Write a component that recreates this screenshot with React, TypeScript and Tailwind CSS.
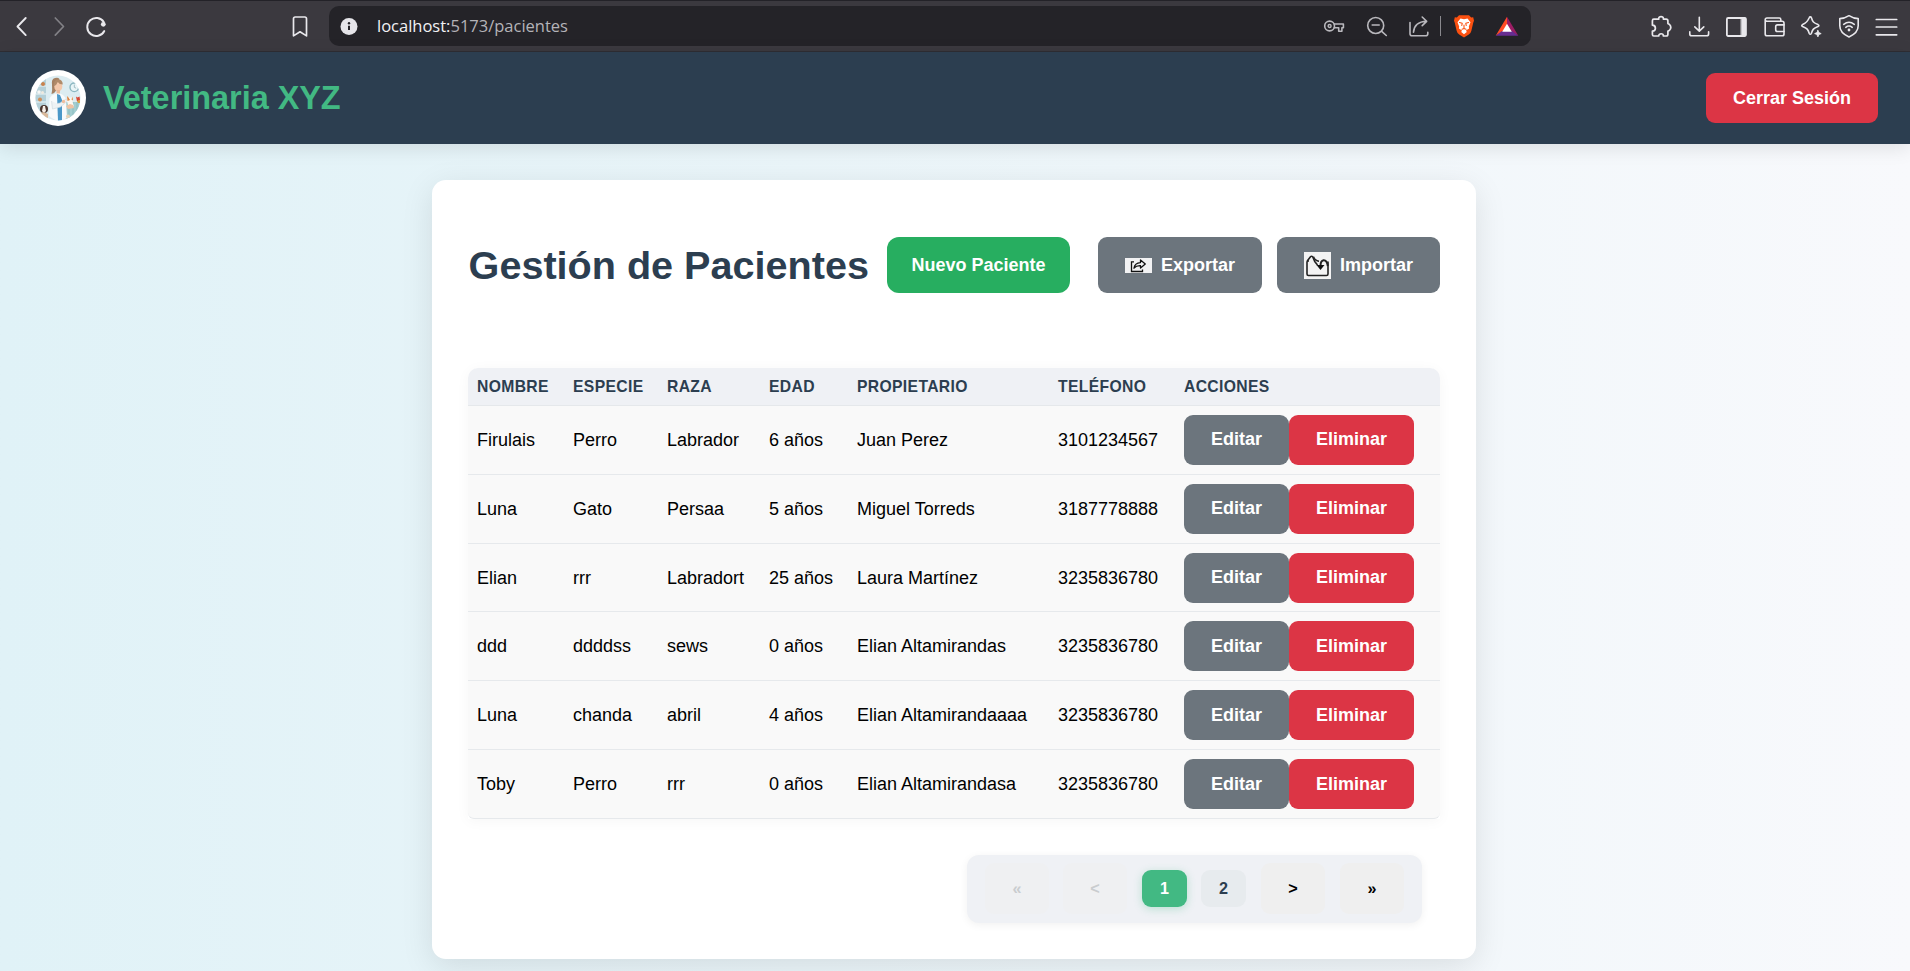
import type { ReactNode } from "react";

const patients = [
  ["Firulais", "Perro", "Labrador", "6 años", "Juan Perez", "3101234567"],
  ["Luna", "Gato", "Persaa", "5 años", "Miguel Torreds", "3187778888"],
  ["Elian", "rrr", "Labradort", "25 años", "Laura Martínez", "3235836780"],
  ["ddd", "ddddss", "sews", "0 años", "Elian Altamirandas", "3235836780"],
  ["Luna", "chanda", "abril", "4 años", "Elian Altamirandaaaa", "3235836780"],
  ["Toby", "Perro", "rrr", "0 años", "Elian Altamirandasa", "3235836780"],
];

const columns = ["Nombre", "Especie", "Raza", "Edad", "Propietario", "Teléfono", "Acciones"];

const rowGrid = "grid grid-cols-[96px_94px_102px_88px_201px_126px_265px] items-center";

function Icon({ children, className = "" }: { children: ReactNode; className?: string }) {
  return (
    <svg
      viewBox="0 0 24 24"
      className={`size-6 shrink-0 ${className}`}
      fill="none"
      stroke="currentColor"
      strokeWidth="1.6"
      strokeLinecap="round"
      strokeLinejoin="round"
    >
      {children}
    </svg>
  );
}

function BrowserBar() {
  return (
    <div className="flex h-[52px] shrink-0 items-center border-t border-b border-t-[#232228] border-b-[#2e2d33] bg-[#3b393f] text-[#e9e8ec]">
      <Icon className="ml-[10px]">
        <path d="M15.7 4 7.5 12.5l8.2 8.6" strokeWidth="1.9" />
      </Icon>
      <Icon className="ml-[13px] text-[#828186]">
        <path d="M8.3 4l8.2 8.5-8.2 8.6" strokeWidth="1.7" />
      </Icon>
      <Icon className="ml-[13px]">
        <path d="M19.9 8.2A9 9 0 1 0 20.3 17" strokeWidth="1.9" />
        <circle cx="19.3" cy="10.3" r="2.4" fill="currentColor" stroke="none" />
      </Icon>
      <Icon className="ml-[180px]">
        <path d="M7.2 3h9.6q1.700 0 1.700 1.700V21.900L12 17.800l-6.500 4.100V4.700Q5.500 3 7.200 3Z" strokeWidth="1.7" />
      </Icon>
      <div className="ml-[17px] flex h-10 w-[1202px] items-center rounded-[10px] bg-[#242328] pr-3 pl-2 text-[#b9b8bd]">
        <Icon>
          <circle cx="12" cy="12.500" r="8.500" fill="#e6e5ea" stroke="none" />
          <path d="M12 11.800v4.200" stroke="#242328" strokeWidth="2" strokeLinecap="butt" />
          <circle cx="12" cy="9.300" r="1.200" fill="#242328" stroke="none" />
        </Icon>
        <span className="ml-[16px] flex-1 font-['Open_Sans',sans-serif] text-[16.500px] leading-6 text-[#b4b3b8]">
          <span className="text-[#f2f1f5]">localhost:</span>5173/pacientes
        </span>
        <Icon>
          <circle cx="7.600" cy="12" r="4.900" />
          <circle cx="7.600" cy="12" r="1.500" strokeWidth="1.400" />
          <path d="M12.200 10H21.400v3.700h-1.500v3.500h-3.200v-3.500H12.200" />
        </Icon>
        <Icon className="ml-[19px]">
          <circle cx="10.700" cy="11.500" r="8" />
          <path d="M7.200 11h7M16.700 17.300l4.600 4.200" />
        </Icon>
        <Icon className="ml-[18px]">
          <path d="M3 8.500v11.200q0 2 2 2H18.800q2 0 2-2v-1.500" />
          <path d="M6.500 18.300C7 11.500 11 7.700 19.500 7.300M15.200 3l4.500 4.300-4.500 4.300" />
        </Icon>
        <div className="ml-[9px] h-5 w-px bg-[#8a898e]" />
        <Icon className="ml-[11px]">
          <path
            d="M7 1.200H17l2.200 2.300 2-.3.800 3.500-.7 1.800-2 8.500q-.5 2-2.500 3.500L12 23.500l-4.800-3Q5.200 19 4.700 17L2.700 8.500 2 6.700l.8-3.500 2 .3Z"
            fill="#fb5010"
            stroke="none"
          />
          <path
            d="M8.500 4.500 12 5.200l3.500-.7 3 3.800-1.700 4.200.3 2-3.100 2 .8 1.500L12 20.300 9.200 18l.8-1.500-3.100-2 .3-2L5.500 8.300Z"
            fill="#fff"
            stroke="none"
          />
          <path d="M7.500 8.500l2.700.8-.4 2.200M16.500 8.500l-2.700.8.400 2.200M12 11v3.700M10 15.200l2-.7 2 .7" stroke="#fb5010" strokeWidth="1.100" />
        </Icon>
        <Icon className="ml-[19px]">
          <path d="M12 2.800.700 21.700 12 15Z" fill="#ff4a24" stroke="none" />
          <path d="M12 2.800 23.300 21.700 12 15Z" fill="#9b1d64" stroke="none" />
          <path d="M.700 21.700H23.300L17 17H7Z" fill="#662d91" stroke="none" />
          <path d="M12 9.700 7.200 17.800h9.600Z" fill="#fff" stroke="none" />
        </Icon>
      </div>
      <div className="ml-auto flex gap-[13.500px] pr-[12px]">
        <Icon>
          <path d="M4.800 5.200H9.700C9.300 1.700 14.800 1.700 14.400 5.200h2.800q1.700 0 1.700 1.700V9.600q1 .2 1.800 1.200 2.200 2.700 0 5.200-.8 1-1.800 1.100v3.200q0 1.700-1.700 1.700H14.400c0-3-4.700-3-4.700 0H4.800q-1.400 0-1.400-1.500V17.200c4-.2 4-5.700 0-6V6.700q0-1.500 1.400-1.500Z" strokeWidth="1.700" />
        </Icon>
        <Icon>
          <path d="M12.300 3.200V17M7.800 12.900l4.500 4.300 4.500-4.300M2.800 17.700v2.200q0 1.900 1.900 1.900H19.700q1.900 0 1.900-1.900v-2.200" />
        </Icon>
        <Icon>
          <rect x="2.900" y="4" width="19" height="18" rx="1.200" strokeWidth="1.800" />
          <path d="M17.500 4.200h4.200v17.600h-4.200Z" fill="currentColor" strokeWidth="1" />
        </Icon>
        <Icon>
          <path d="M18.800 7.300V5.500q0-1.500-1.500-1.500H5Q3.200 4 3.200 5.700q0 1.600 1.800 1.600H20.200q1.800 0 1.800 1.800V20q0 1.800-1.800 1.800H5q-1.800 0-1.800-1.800V5.700" />
          <path d="M22 10.900H15.500q-1.800 0-1.800 1.800v3q0 1.800 1.800 1.800h6.500" />
        </Icon>
        <Icon>
          <path d="M11.300 2.900q.8 0 1.100.9c1.200 4 2 4.900 6.600 6.800q1.800.9 0 1.900c-4.600 1.900-5.400 2.800-6.600 6.800q-1.100 1.800-2.200 0C9 15.300 8.200 14.400 3.600 12.500q-1.800-1 0-1.900 4.600-1.900 6.600-6.800.3-.9 1.100-.9Z" />
          <path d="M18.900 16.300l1 2.300 2.300 1-2.300 1-1 2.300-1-2.300-2.300-1 2.300-1Z" fill="currentColor" strokeWidth=".8" />
        </Icon>
        <Icon>
          <path d="M12 1.700q4.300 2.900 9.200 2.900v7.200q0 7.200-9.200 11.100-9.200-3.900-9.200-11.100V4.600q4.900 0 9.200-2.900Z" />
          <path d="M6.700 10.300q5.300-4.200 10.600 0M8.800 13.300q3.200-2.500 6.400 0" />
          <circle cx="12" cy="16" r="1.400" fill="currentColor" stroke="none" />
        </Icon>
        <Icon>
          <path d="M2.300 5.500H22.700M2.300 13H22.700M2.300 20.800H22.700" strokeWidth="1.700" />
        </Icon>
      </div>
    </div>
  );
}

function Logo() {
  return (
    <svg viewBox="0 0 56 56" className="size-14 shrink-0">
      <defs>
        <clipPath id="logo-clip">
          <circle cx="28" cy="28" r="22.500" />
        </clipPath>
      </defs>
      <circle cx="28" cy="28" r="28" fill="#fff" />
      <g clipPath="url(#logo-clip)">
        <rect width="56" height="56" fill="#dcecf1" />
        <rect x="35" y="32" width="20" height="20" fill="#a3cdd0" />
        <path d="M39 32v18M43 32v18M47 32v18" stroke="#87b9bd" strokeWidth=".8" />
        <rect x="4" y="9" width="12" height="34" fill="#b5d0d8" />
        <path d="M4 16h12M4 24h12M4 32h12" stroke="#eef6f8" strokeWidth="1.200" />
        <circle cx="13" cy="14" r="2" fill="#c9824d" />
        <circle cx="9" cy="22" r="1.800" fill="#f7f7f5" />
        <circle cx="12.500" cy="22.500" r="1.500" fill="#efeadf" />
        <circle cx="10" cy="29.500" r="2" fill="#cf8f5b" />
        <circle cx="44.300" cy="17.300" r="4.300" fill="#e9f5f7" stroke="#8cb7c1" strokeWidth="1.400" />
        <path d="M44.300 14.500v2.800l1.800.9" fill="none" stroke="#7295a0" strokeWidth=".6" />
        <path d="M25 8q-4 1-3 7 .5 5-.5 9 5-1 5-7l3-8Q28 7 25 8Z" fill="#a58163" />
        <ellipse cx="28.300" cy="16.500" rx="4" ry="5" fill="#f3c8ab" />
        <path d="M24 16q-.5-7 4.500-6.500 4 0 4.300 5-3.500 0-5-2.500-1 3-3.800 4Z" fill="#b08b6a" />
        <path d="M26.500 20h3.500v6h-3.500Z" fill="#ecb999" />
        <path d="M26 23.500q-5 1.500-6.500 5L19 46q6 5 12 5l6-3-1-19q-1.500-4-6-5.500Z" fill="#f8fafb" />
        <path d="M27 24l3 1 2 5v21h-4Z" fill="#4b98c8" />
        <path d="M21.500 31l1 8 8-2 7-6-1.500-2-6 4-3 .5" fill="#eef2f4" stroke="#cdd9de" strokeWidth=".6" />
        <circle cx="33.500" cy="31.500" r="1.700" fill="#eebd9d" />
        <path d="M37 26l1.500 1.500h3L43 26.500l-.5 5 1.500 5h-5.500L37 31Z" fill="#fbf7f0" />
        <path d="M37 26l1.500 1.500L40 30l-2.500 1ZM42.500 26.500l.5 4-1.500-1Z" fill="#d98545" />
        <path d="M36 36l4-2 3 1 1 3-6 1Z" fill="#f0c2a2" />
        <path d="M46 26.500l1.500 1 2-1 .5 3.500-3 1.500Z" fill="#d84432" />
        <path d="M47 31l3-1v3h-2Z" fill="#d9a13d" />
        <circle cx="14" cy="39" r="4" fill="#4a352d" />
        <path d="M13 36h2l1 5-2 2-2-2Z" fill="#f6efe8" />
        <path d="M10 43q4-2 8 1v5h-7Z" fill="#d9b99b" />
        <circle cx="38" cy="46.500" r="2" fill="#e7d3b8" />
      </g>
    </svg>
  );
}

function Button({ children, className }: { children: ReactNode; className: string }) {
  return (
    <button className={`flex items-center justify-center rounded-[9px] text-[18px] font-bold text-white ${className}`}>
      {children}
    </button>
  );
}

function PageButton({ children, className }: { children: ReactNode; className: string }) {
  return (
    <button className={`flex items-center justify-center rounded-[9px] pb-0.5 text-[16.200px] font-bold ${className}`}>
      {children}
    </button>
  );
}

export default function App() {
  return (
    <div className="flex h-[971px] w-[1910px] flex-col overflow-hidden bg-linear-to-r from-[#e0f2f7] to-[#f8f9fc] font-['Liberation_Sans',Arial,sans-serif] text-black">
      <BrowserBar />

      <header className="flex h-[92px] shrink-0 items-center bg-[#2c3e50] pr-8 pl-[30px] shadow-[0_4px_18px_rgba(0,0,0,0.1)]">
        <Logo />
        <span className="ml-[17px] text-[32.400px] leading-none font-bold text-[#42b983]">Veterinaria XYZ</span>
        <Button className="ml-auto h-[50px] w-[172px] bg-[#dc3545]">Cerrar Sesión</Button>
      </header>

      <main className="mt-9 ml-[432px] flex h-[779px] w-[1044px] shrink-0 flex-col rounded-[14px] bg-white px-9 pt-[57px] shadow-[0_8px_32px_rgba(0,0,0,0.1)]">
        <div className="flex h-14 shrink-0 items-center">
          <h1 className="w-[419px] pt-0.5 pl-[0.600px] text-[39.600px] leading-none font-bold whitespace-nowrap text-[#2c3e50]">
            Gestión de Pacientes
          </h1>
          <Button className="h-14 w-[183px] rounded-[12px] bg-[#27ae60]">Nuevo Paciente</Button>
          <Button className="ml-7 h-14 w-[164px] gap-[9px] bg-[#6c757d]">
            <svg viewBox="0 0 27 15" className="h-[15px] w-[27px]" fill="none" stroke="#111" strokeWidth="1.300">
              <rect width="27" height="15" fill="#f2f2f3" stroke="none" />
              <path d="M9 3.800H6.500v9.700h11V11.500" />
              <path d="M9 10.200q.8-5.400 6.500-5.600V1.900l4.800 4-4.800 4.100V7.700Q11.300 7.500 9 10.200Z" strokeLinejoin="round" />
            </svg>
            Exportar
          </Button>
          <Button className="ml-[15px] h-14 w-[163px] gap-[9px] bg-[#6c757d]">
            <svg viewBox="0 0 27 27" className="size-[27px]" fill="none" stroke="#222" strokeWidth="1.600" strokeLinejoin="round">
              <rect width="27" height="27" fill="#f3f3f3" stroke="none" />
              <path d="M5 9H3.800Q3 9 3 10v12q0 1.500 1.500 1.500h18Q24 23.500 24 22V9.500" />
              <path d="M3.200 9 6.500 4.800q1-1.200 2.200 0l2 4.700 2.800 3.500" />
              <path d="M9.500 4.800q1.500 4.200 5.500 4.400" />
              <path d="M23.800 14Q23 8 19.500 8.300 16.500 8.800 16.500 14" strokeWidth="2" />
              <path d="M12.500 13h8L16.500 18Z" fill="#111" stroke="none" />
            </svg>
            Importar
          </Button>
        </div>

        <div className="mt-[75px] shrink-0 rounded-t-[10px] shadow-[0_2px_14px_rgba(0,0,0,0.04)]">
          <div className={`${rowGrid} h-[38px] rounded-t-[10px] border-b border-[#e5e8eb] bg-[#eff1f5]`}>
            {columns.map((name) => (
              <span key={name} className="pl-[9px] text-[15.700px] leading-none font-bold tracking-[0.350px] text-[#2c3e50] uppercase">
                {name}
              </span>
            ))}
          </div>
          {patients.map((patient, row) => (
            <div key={row} className={`${rowGrid} h-[68.830px] border-b border-[#e6e9ec] bg-[#f9f9f9] last:rounded-b-[6px]`}>
              {patient.map((value, column) => (
                <span key={column} className="pl-[9px] text-[18px] leading-none whitespace-nowrap">
                  {value}
                </span>
              ))}
              <div className="flex pl-[9px]">
                <Button className="h-[50px] w-[105px] bg-[#6c757d]">Editar</Button>
                <Button className="h-[50px] w-[125px] bg-[#dc3545]">Eliminar</Button>
              </div>
            </div>
          ))}
        </div>

        <nav className="mt-9 mr-[18px] flex h-[68px] w-[455px] shrink-0 items-center self-end rounded-[12px] bg-[#eff1f5] px-[18px] shadow-[0_2px_9px_rgba(0,0,0,0.06)]">
          <PageButton className="h-[51px] w-[64px] bg-[#eff0f2] text-[#c9cccf]">«</PageButton>
          <PageButton className="ml-[14px] h-[51px] w-[64px] bg-[#eff0f2] text-[#c9cccf]">&lt;</PageButton>
          <PageButton className="ml-[15px] h-[37px] w-[45px] bg-[#42b983] text-white shadow-[0_2px_8px_rgba(66,185,131,0.3)]">1</PageButton>
          <PageButton className="ml-[14px] h-[37px] w-[45px] bg-[#e7ebee] text-[#2c3e50]">2</PageButton>
          <PageButton className="ml-[15px] h-[51px] w-[64px] bg-[#efefef]">&gt;</PageButton>
          <PageButton className="ml-[15px] h-[51px] w-[64px] bg-[#efefef]">»</PageButton>
        </nav>
      </main>
    </div>
  );
}
